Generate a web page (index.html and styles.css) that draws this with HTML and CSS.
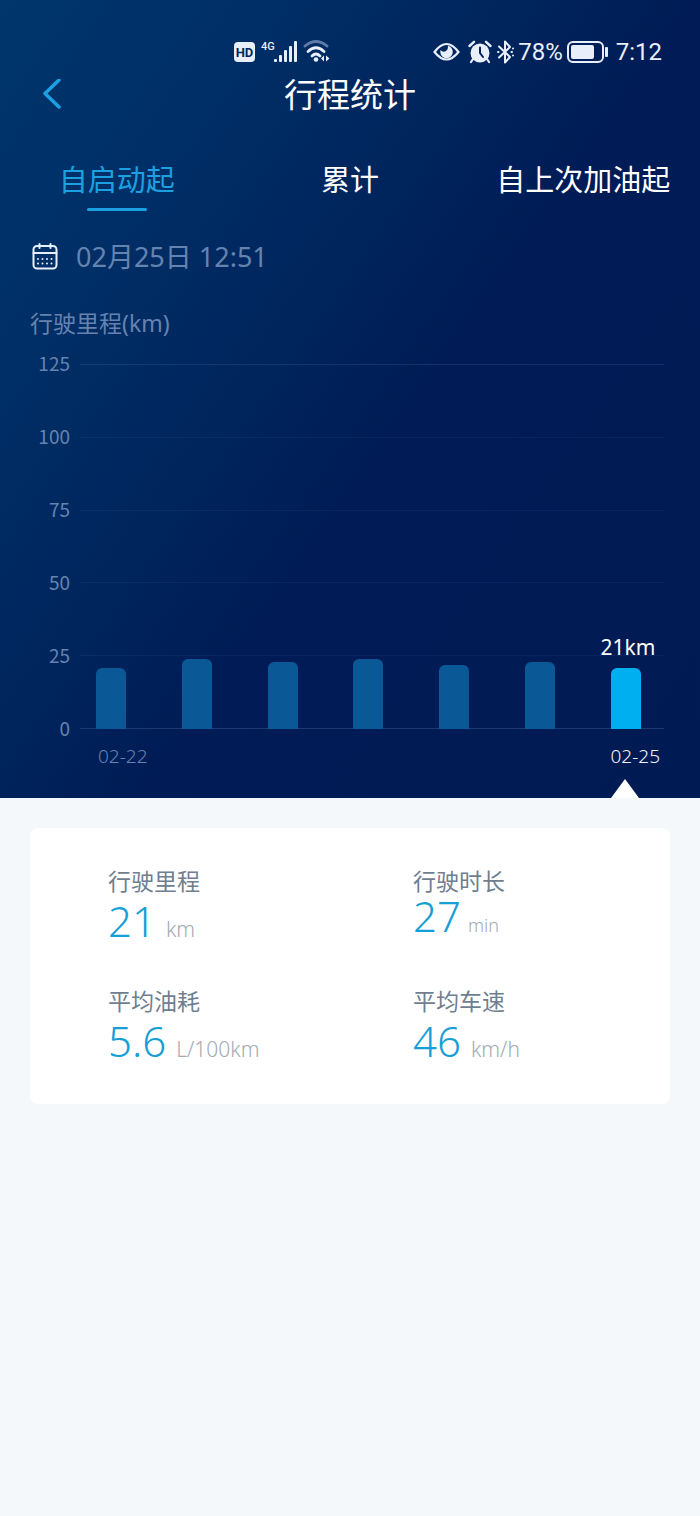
FILE: index.html
```html
<!DOCTYPE html>
<html lang="zh-CN">

<head>
    <meta charset="UTF-8">
    <meta name="viewport" content="width=device-width, initial-scale=1.0">
    <title>行程统计</title>
    <link rel="stylesheet" href="styles.css">
</head>

<body>
    <header class="top">
        <div class="status-bar">
            <div class="status-group">
                <svg width="22" height="22" viewBox="0 0 22 22">
                    <rect x="0" y="1" width="21" height="20" rx="4" fill="#e9effa" />
                    <text class="hd-text" x="10.500" y="16" text-anchor="middle">HD</text>
                </svg>
                <svg width="37" height="26" viewBox="0 0 37 26">
                    <text class="net-text" x="0" y="11">4G</text>
                    <g fill="#e9effa">
                        <rect x="13" y="20" width="3" height="3" rx="1" />
                        <rect x="18" y="16" width="3" height="7" rx="1" />
                        <rect x="23" y="11" width="3" height="12" rx="1" />
                        <rect x="28" y="7" width="3" height="16" rx="1" />
                        <rect x="33" y="2" width="3" height="21" rx="1" />
                    </g>
                </svg>
                <svg width="28" height="26" viewBox="0 0 28 26" fill="none" stroke-width="2.8" stroke-linecap="round">
                    <path d="M2 7Q13 -2 24 7" stroke="#5f7ba8" />
                    <path d="M5 12.500Q13 5 21 12.500" stroke="#e9effa" />
                    <path d="M9 17Q13 13 17 17" stroke="#e9effa" />
                    <circle cx="13" cy="20.500" r="2.300" fill="#e9effa" />
                    <path d="M21 16.500v6l-3-3zM23 16.500v6l3.500-3z" fill="#e9effa" />
                </svg>
            </div>
            <div class="status-group phone-state">
                <svg class="icon-eye" width="27" height="22" viewBox="0 0 27 22">
                    <path d="M1.500 11Q13.500 -5 25.500 11Q13.500 26 1.500 11z" fill="none" stroke="#e9effa" stroke-width="2.200" />
                    <path d="M15 4.800A6.300 6.300 0 1 1 7.500 9Q10 12 13 10Q15.500 8 15 4.800z" fill="#e9effa" />
                </svg>
                <svg width="24" height="24" viewBox="0 0 24 24">
                    <path d="M5 19L3 22M19 19L21 22" stroke="#e9effa" stroke-width="2.200" stroke-linecap="round" />
                    <circle cx="12" cy="13" r="9.500" fill="#e9effa" />
                    <path d="M1.500 6L6 1.800M22.500 6L18 1.800" stroke="#e9effa" stroke-width="2.400" stroke-linecap="round" />
                    <path d="M12 7.500V13L15 17" fill="none" stroke="#00225c" stroke-width="2" stroke-linecap="round" />
                </svg>
                <svg width="18" height="24" viewBox="0 0 18 24" fill="none" stroke="#e9effa" stroke-width="2" stroke-linejoin="round" stroke-linecap="round">
                    <path d="M3 6.500L14 17L9 22.500V1.500L14 7L3 17.500" />
                    <path d="M2 12h.5M15.500 12h.5M17 8.500v0M17 15.500v0" />
                </svg>
                <span class="status-text">78%</span>
                <svg class="icon-battery" width="41" height="22" viewBox="0 0 41 22">
                    <rect x="1" y="1" width="35" height="20" rx="5" fill="none" stroke="#e9effa" stroke-width="2" />
                    <rect x="4" y="4" width="23" height="14" rx="2" fill="#e9effa" />
                    <rect x="38" y="6" width="3" height="10" rx="1" fill="#e9effa" />
                </svg>
                <time class="status-text">7:12</time>
            </div>
        </div>

        <div class="title-bar">
            <button class="back" type="button" aria-label="返回">
                <svg width="20" height="32" viewBox="0 0 20 32" fill="none" stroke="#1ba1e2" stroke-width="3.500" stroke-linecap="round" stroke-linejoin="round">
                    <path d="M17 1L3 14.500L17 28" />
                </svg>
            </button>
            <h1>行程统计</h1>
        </div>

        <nav class="tabs">
            <button class="tab active" type="button">自启动起</button>
            <button class="tab" type="button">累计</button>
            <button class="tab" type="button">自上次加油起</button>
        </nav>

        <div class="date-row">
            <svg width="26" height="28" viewBox="0 0 26 28" fill="none" stroke="#e9effa" stroke-width="2" stroke-linecap="round">
                <rect x="1.500" y="3" width="23" height="22.500" rx="3.500" />
                <path d="M1.500 10h23" />
                <path d="M7.500 1v4M18.500 1v4" />
                <path d="M6 16h0M10.500 16h0M15 16h0M19.500 16h0M6 20.500h0M10.500 20.500h0M15 20.500h0M19.500 20.500h0" />
            </svg>
            <time>02月25日 12:51</time>
        </div>

        <section class="chart">
            <h2>行驶里程(km)</h2>
            <div class="chart-body">
                <div class="y-axis">
                    <span>125</span>
                    <span>100</span>
                    <span>75</span>
                    <span>50</span>
                    <span>25</span>
                    <span>0</span>
                </div>
                <div class="plot">
                    <div class="lines">
                        <i></i><i></i><i></i><i></i><i></i>
                    </div>
                    <div class="bars">
                        <!-- height = km / 125 -->
                        <div class="bar" style="height: 16.8%"></div>
                        <div class="bar" style="height: 19.2%"></div>
                        <div class="bar" style="height: 18.4%"></div>
                        <div class="bar" style="height: 19.2%"></div>
                        <div class="bar" style="height: 17.6%"></div>
                        <div class="bar" style="height: 18.4%"></div>
                        <div class="bar selected" style="height: 16.8%"><span class="bar-value">21km</span></div>
                    </div>
                </div>
            </div>
            <div class="x-axis">
                <span>02-22</span>
                <span class="selected">02-25</span>
            </div>
            <div class="pointer"></div>
        </section>
    </header>

    <main>
        <dl class="card">
            <div class="metric">
                <dt>行驶里程</dt>
                <dd>21<small>km</small></dd>
            </div>
            <div class="metric duration">
                <dt>行驶时长</dt>
                <dd>27<small>min</small></dd>
            </div>
            <div class="metric">
                <dt>平均油耗</dt>
                <dd>5.6<small>L/100km</small></dd>
            </div>
            <div class="metric">
                <dt>平均车速</dt>
                <dd>46<small>km/h</small></dd>
            </div>
        </dl>
    </main>
</body>

</html>
```
FILE: styles.css
```css
* {
    box-sizing: border-box;
}

body {
    margin: 0;
    background-color: #f4f8fb;
    font-family: 'Noto Sans', 'Noto Sans CJK SC', sans-serif;
}

h1,
h2,
dl,
dd {
    margin: 0;
    font-weight: 400;
}

svg {
    display: block;
    flex-shrink: 0;
}

button {
    padding: 0;
    border: none;
    background: none;
    font-family: inherit;
    cursor: pointer;
}

.top {
    padding-top: 36px;
    background: linear-gradient(125deg, #00366c 0%, #002e66 22%, #00245c 42%, #001b55 56%, #001a54 100%);
    color: #ffffff;
}

/* status bar */
.status-bar {
    display: flex;
    justify-content: space-between;
    align-items: center;
    height: 32px;
    padding: 0 38px 0 33.4%;
}

.status-group {
    display: flex;
    align-items: center;
    gap: 5px;
}

.phone-state {
    gap: 4px;
}

.icon-eye,
.icon-battery {
    margin-right: 4px;
}

.status-text {
    color: #e9effa;
    font-family: Roboto, sans-serif;
    font-size: 24px;
    line-height: 32px;
}

.hd-text {
    fill: #00265e;
    font: 700 13px Roboto, sans-serif;
}

.net-text {
    fill: #e9effa;
    font: 500 11px Roboto, sans-serif;
}

/* title */
.title-bar {
    display: grid;
    grid-template-columns: 62px 1fr 62px;
    align-items: center;
    height: 54px;
}

.back {
    display: flex;
    justify-content: flex-end;
}

h1 {
    font-size: 33px;
    line-height: 48px;
    text-align: center;
}

/* tabs */
.tabs {
    display: grid;
    grid-template-columns: repeat(3, 1fr);
    margin-top: 35px;
}

.tab {
    display: flex;
    flex-direction: column;
    align-items: center;
    gap: 5px;
    color: #ffffff;
    font-size: 29px;
    line-height: 46px;
    white-space: nowrap;
}

.tab::after {
    content: '';
    width: 60px;
    height: 3px;
    border-radius: 2px;
}

.tab.active {
    color: #1ba1e2;
}

.tab.active::after {
    background-color: #1ba1e2;
}

.date-row {
    display: flex;
    align-items: center;
    gap: 18px;
    margin-top: 26px;
    padding-left: 32px;
    color: #6583b0;
    font-size: 27px;
    line-height: 40px;
}

/* chart */
.chart {
    padding: 28px 36px 0 30px;
    color: #6583b0;
}

h2 {
    font-size: 23px;
    line-height: 36px;
}

.chart-body {
    display: grid;
    grid-template-columns: 40px 1fr;
    gap: 10px;
    margin-top: 23px;
}

.y-axis {
    display: flex;
    flex-direction: column;
    justify-content: space-between;
    margin: -13px 0 -11px;
    font-family: 'Noto Sans CJK SC', sans-serif;
    font-size: 19px;
    line-height: 24px;
    text-align: right;
}

.plot {
    display: grid;
    height: 365px;
}

.lines,
.bars {
    grid-area: 1 / 1;
}

.lines {
    display: grid;
    border-bottom: 1px solid #1d3a70;
}

.lines i {
    border-top: 1px solid rgba(120, 160, 220, 0.08);
}

.lines i:first-child {
    border-top-color: rgba(120, 160, 220, 0.16);
}

.bars {
    display: flex;
    justify-content: space-between;
    align-items: flex-end;
    padding: 0 23px 0 16px;
}

.bar {
    display: flex;
    justify-content: center;
    width: 30px;
    border-radius: 6px 6px 0 0;
    background-color: #0a5996;
}

.bar.selected {
    background-color: #00aff0;
}

.bar-value {
    margin: -37px 0 0 4px;
    color: #ffffff;
    font-size: 21px;
    line-height: 32px;
}

.x-axis {
    display: flex;
    justify-content: space-between;
    margin-top: 15px;
    padding: 0 4px 0 68px;
    font-size: 19px;
    font-weight: 300;
    line-height: 24px;
}

.x-axis .selected {
    color: #f0f5ff;
}

.pointer {
    width: 28px;
    height: 19px;
    margin: 11px 25px 0 auto;
    background-color: #ffffff;
    clip-path: polygon(50% 0, 100% 100%, 0 100%);
}

/* trip data */
main {
    padding: 30px;
}

.card {
    display: grid;
    grid-template-columns: 1fr 1fr;
    gap: 32px 48px;
    padding: 35px 0 33px 78px;
    border-radius: 8px;
    background-color: #ffffff;
}

dt {
    color: #6f7f90;
    font-size: 23px;
    line-height: 36px;
}

dd {
    display: flex;
    align-items: baseline;
    gap: 10px;
    color: #169fd6;
    font-size: 42px;
    font-weight: 300;
    line-height: 44px;
    white-space: nowrap;
}

small {
    color: #a3abb2;
    font-size: 21px;
}

.duration dd {
    gap: 7px;
    line-height: 34px;
}

.duration small {
    font-size: 18px;
}
```
